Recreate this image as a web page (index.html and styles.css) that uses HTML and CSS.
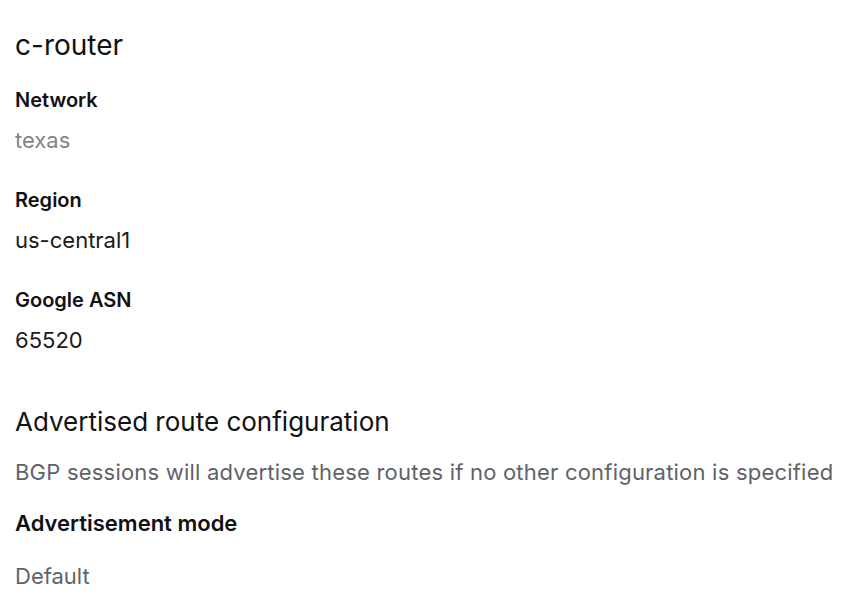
FILE: index.html
```html
<!DOCTYPE html>
<html>
<head>
<meta charset="utf-8">
<link rel="stylesheet" href="styles.css">
</head>
<body>
<div class="page">
  <h1 class="title">c-router</h1>
  <div class="field">
    <div class="label">Network</div>
    <div class="value muted">texas</div>
  </div>
  <div class="field">
    <div class="label">Region</div>
    <div class="value">us-central1</div>
  </div>
  <div class="field">
    <div class="label">Google ASN</div>
    <div class="value">65520</div>
  </div>
  <h2 class="section">Advertised route configuration</h2>
  <div class="desc">BGP sessions will advertise these routes if no other configuration is specified</div>
  <div class="label mode">Advertisement mode</div>
  <div class="value grey mode-value">Default</div>
</div>
</body>
</html>
```

FILE: styles.css
```css
html, body {
  margin: 0;
  padding: 0;
  background: #ffffff;
}
body {
  font-family: Inter, Roboto, "Liberation Sans", sans-serif;
  color: #111111;
}
.page {
  padding: 25px 15px 0 15px;
}
.title {
  margin: 0;
  font-size: 28px;
  font-weight: 400;
  line-height: 40px;
  color: #111111;
}
.field {
  margin-top: 21px;
}
.field + .field {
  margin-top: 32px;
}
.label {
  font-size: 20px;
  font-weight: 600;
  line-height: 28px;
  color: #111111;
}
.value {
  margin-top: 12px;
  font-size: 22px;
  line-height: 28px;
  color: #1a1a1a;
}
.value.muted {
  color: #80868b;
}
.value.grey {
  color: #5f6368;
}
.section {
  margin: 50px 0 0 0;
  font-size: 26px;
  font-weight: 400;
  line-height: 36px;
  color: #111111;
}
.desc {
  margin-top: 18px;
  font-size: 22px;
  letter-spacing: 0.21px;
  line-height: 28px;
  color: #5f6368;
}
.label.mode {
  margin-top: 23px;
  font-size: 22px;
}
.mode-value {
  margin-top: 25px;
}
```
